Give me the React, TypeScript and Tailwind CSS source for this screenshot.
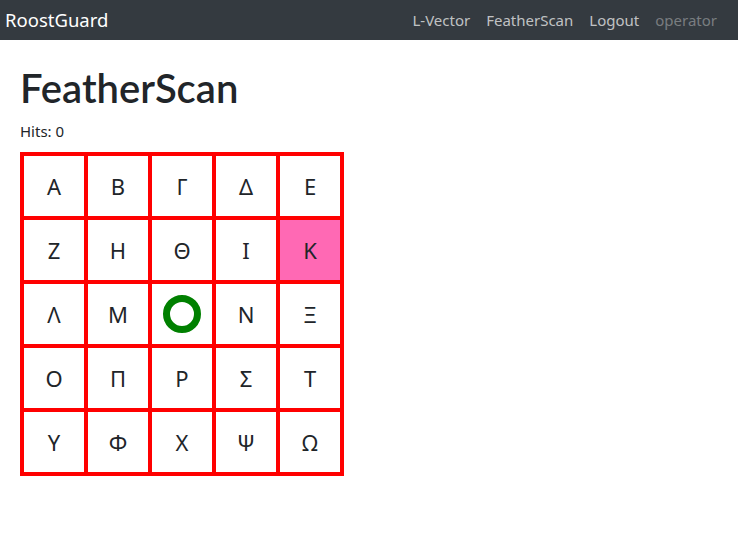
export default function App() {
  const rows = [
    ["Α", "Β", "Γ", "Δ", "Ε"],
    ["Ζ", "Η", "Θ", "Ι", "Κ"],
    ["Λ", "Μ", "", "Ν", "Ξ"],
    ["Ο", "Π", "Ρ", "Σ", "Τ"],
    ["Υ", "Φ", "Χ", "Ψ", "Ω"],
  ]

  return (
    <div className="min-h-[537px] bg-white font-['Noto_Sans',sans-serif] text-[#212529]">
      <nav className="h-10 bg-[#343a40] flex items-center justify-between pl-[5px] pr-[21px]">
        <span className="text-white text-[18.5px] leading-none">RoostGuard</span>
        <div className="flex items-center gap-4 text-[15px]">
          <span className="text-white/70">L-Vector</span>
          <span className="text-white/70">FeatherScan</span>
          <span className="text-white/70">Logout</span>
          <span className="text-white/35">operator</span>
        </div>
      </nav>

      <main className="px-5 pt-6">
        <h1 className="font-['Lato',sans-serif] text-[40px] font-semibold leading-[48px] mb-2">FeatherScan</h1>
        <p className="text-[15px] leading-[22.5px] mb-[9.5px]">Hits: 0</p>

        <div className="inline-grid grid-cols-[repeat(5,60px)] gap-1 p-1 bg-[#ff0000]">
          {rows.flatMap((row, r) =>
            row.map((ch, c) => {
              const pink = r === 1 && c === 4
              return (
                <div
                  key={`${r}-${c}`}
                  className={`h-[60px] flex items-center justify-center text-[22px] ${pink ? "bg-[#ff69b4]" : "bg-white"}`}
                >
                  {r === 2 && c === 2 ? (
                    <div className="w-[38px] h-[38px] rounded-full border-[7px] border-[#008000]" />
                  ) : (
                    ch
                  )}
                </div>
              )
            })
          )}
        </div>
      </main>
    </div>
  )
}
